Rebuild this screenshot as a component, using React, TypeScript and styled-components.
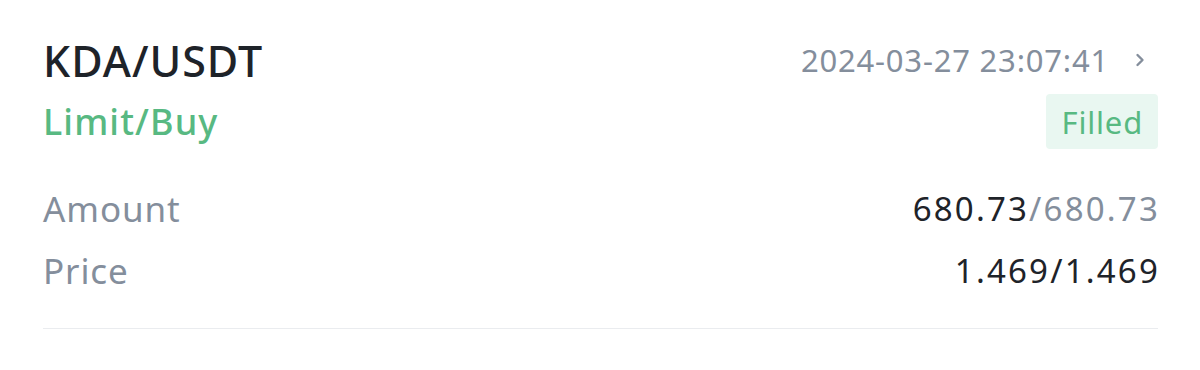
import { createGlobalStyle, styled } from 'styled-components'

const GlobalStyle = createGlobalStyle`
  body {
    margin: 0;
    background: #ffffff;
    font-family: 'Noto Sans', 'Liberation Sans', sans-serif;
  }
`

const COLORS = {
  text: '#1e2329',
  gray: '#848e9c',
  green: '#58b982',
  badge: '#e9f7f1',
  line: '#eaecef',
}

const Card = styled.div`
  padding: 30px 42px 0 43px;
  display: flex;
  flex-direction: column;
`

const HeaderRow = styled.div`
  display: flex;
  justify-content: space-between;
  align-items: center;
  height: 60px;
`

const Pair = styled.div`
  font-size: 43px;
  font-weight: 500;
  color: ${COLORS.text};
  letter-spacing: 1px;
`

const DateLink = styled.div`
  display: flex;
  align-items: center;
  gap: 26px;
  font-size: 31px;
  letter-spacing: 0.8px;
  color: ${COLORS.gray};
  padding-right: 13px;
`

const SideRow = styled.div`
  display: flex;
  justify-content: space-between;
  align-items: center;
  margin-top: 4px;
  height: 55px;
`

const Side = styled.div`
  font-size: 36px;
  font-weight: 500;
  letter-spacing: 1.1px;
  color: ${COLORS.green};
`

const Badge = styled.div`
  background: ${COLORS.badge};
  color: ${COLORS.green};
  font-size: 31px;
  letter-spacing: 0.8px;
  border-radius: 4px;
  padding: 0 15px 0 16px;
  height: 55px;
  display: flex;
  align-items: center;
`

const InfoList = styled.div`
  display: flex;
  flex-direction: column;
  margin-top: 31px;
  gap: 6px;
  padding-bottom: 30px;
  border-bottom: 1px solid ${COLORS.line};
`

const InfoRow = styled.div`
  display: flex;
  justify-content: space-between;
  align-items: center;
  height: 56px;
`

const Label = styled.div`
  font-size: 35px;
  letter-spacing: 0.9px;
  color: ${COLORS.gray};
`

const Value = styled.div`
  font-size: 33px;
  letter-spacing: 2.2px;
  margin-right: -2px;
  color: ${COLORS.text};
`

const Muted = styled.span`
  color: ${COLORS.gray};
`

const Chevron = () => (
  <svg width="10" height="14" viewBox="0 0 10 14" fill="none">
    <path d="M2.5 2L7.5 7L2.5 12" stroke="#848e9c" strokeWidth="2.4" strokeLinecap="round" strokeLinejoin="round" />
  </svg>
)

const App = () => {
  return (
    <>
      <GlobalStyle />
      <Card>
        <HeaderRow>
          <Pair>KDA/USDT</Pair>
          <DateLink>
            <span>2024-03-27 23:07:41</span>
            <Chevron />
          </DateLink>
        </HeaderRow>
        <SideRow>
          <Side>Limit/Buy</Side>
          <Badge>Filled</Badge>
        </SideRow>
        <InfoList>
          <InfoRow>
            <Label>Amount</Label>
            <Value>
              680.73<Muted>/680.73</Muted>
            </Value>
          </InfoRow>
          <InfoRow>
            <Label>Price</Label>
            <Value>1.469/1.469</Value>
          </InfoRow>
        </InfoList>
      </Card>
    </>
  )
}

export default App
